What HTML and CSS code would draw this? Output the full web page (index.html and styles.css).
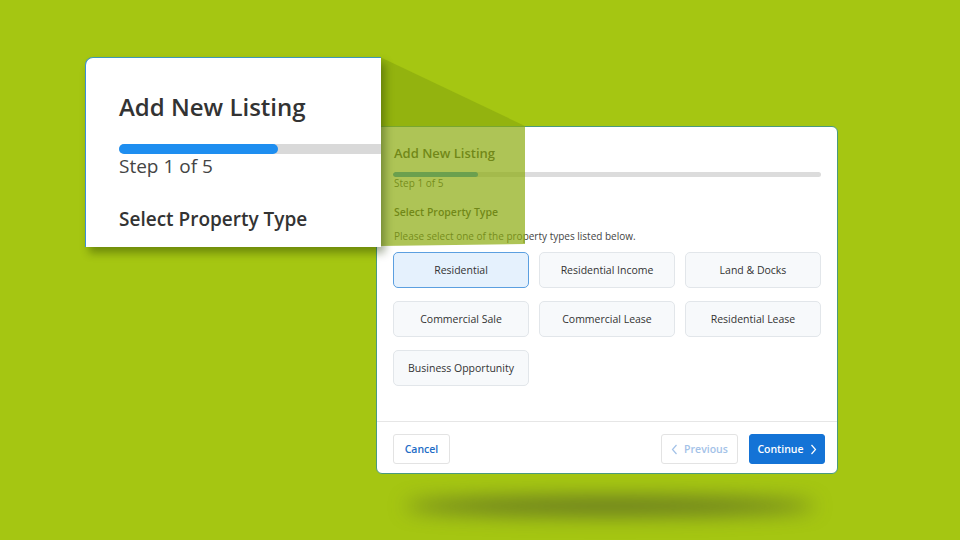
FILE: index.html
```html
<html>

<head>
    <link rel="stylesheet" href="styles.css">
</head>
    <body>
        <div class="floor-shadow"></div>

        <div class="modal">
            <div class="modal-body">
                <h2 class="title">Add New Listing</h2>
                <div class="progress"><div class="progress-fill"></div></div>
                <p class="step">Step 1 of 5</p>
                <h3 class="section">Select Property Type</h3>
                <p class="hint">Please select one of the property types listed below.</p>

                <div class="types">
                    <button class="type-btn selected">Residential</button>
                    <button class="type-btn">Residential Income</button>
                    <button class="type-btn">Land &amp; Docks</button>
                    <button class="type-btn">Commercial Sale</button>
                    <button class="type-btn">Commercial Lease</button>
                    <button class="type-btn">Residential Lease</button>
                    <button class="type-btn">Business Opportunity</button>
                </div>
            </div>

            <div class="modal-footer">
                <button class="foot-btn cancel-btn">Cancel</button>
                <div class="nav">
                    <button class="foot-btn prev-btn">
                        <svg width="7" height="11" viewBox="0 0 7 11"><polyline points="5.5,1 1.5,5.5 5.5,10" fill="none" stroke="currentColor" stroke-width="1.2"/></svg>
                        Previous
                    </button>
                    <button class="foot-btn next-btn">
                        Continue
                        <svg width="7" height="11" viewBox="0 0 7 11"><polyline points="1.5,1 5.5,5.5 1.5,10" fill="none" stroke="currentColor" stroke-width="1.2"/></svg>
                    </button>
                </div>
            </div>
        </div>

        <svg class="projection" width="960" height="540" viewBox="0 0 960 540">
            <polygon points="380,57 525,126 525,244 380,246" fill="rgba(140,171,14,0.7)"/>
        </svg>

        <div class="zoom-box">
            <h2 class="zoom-title">Add New Listing</h2>
            <div class="zoom-progress"><div class="zoom-fill"></div></div>
            <p class="zoom-step">Step 1 of 5</p>
            <h3 class="zoom-section">Select Property Type</h3>
        </div>
    </body>

</html>
```

FILE: styles.css
```css
html , body {
    width: 100%;
    height: 100%;
    overflow: hidden;
}
body{
    margin: 0;
    padding: 0;
    background-color: #a5c612;
    font-family: "Open Sans", "Liberation Sans", sans-serif;
    color: #333;
    position: relative;
}
button{
    font-family: inherit;
    cursor: pointer;
}

/* main dialog */
.modal{
    position: absolute;
    left: 376px;
    top: 126px;
    width: 460px;
    height: 346px;
    background-color: #fff;
    border: 1px solid #4a9a7e;
    border-radius: 6px;
    display: flex;
    flex-direction: column;
}
.modal-body{
    flex: 1;
    padding: 17px 16px 0 16px;
}
.title{
    margin: 0 0 0 1px;
    font-size: 13px;
    font-weight: 600;
    line-height: 18px;
    color: #333;
}
.progress{
    margin-top: 10px;
    height: 5px;
    border-radius: 3px;
    background-color: #dcdcdc;
    overflow: hidden;
}
.progress-fill{
    width: 85px;
    height: 100%;
    border-radius: 3px;
    background-color: #1e88e5;
}
.step{
    margin: 0 0 0 1px;
    font-size: 10px;
    line-height: 12px;
    color: #444;
}
.section{
    margin: 16px 0 0 1px;
    font-size: 10.5px;
    font-weight: 600;
    line-height: 14px;
    color: #333;
}
.hint{
    margin: 10px 0 0 1px;
    font-size: 10px;
    line-height: 14px;
    color: #444;
}
.types{
    margin-top: 9px;
    display: grid;
    grid-template-columns: repeat(3, 136px);
    column-gap: 10px;
    row-gap: 13px;
}
.type-btn{
    height: 36px;
    padding: 0;
    border: 1px solid #e2e6ea;
    border-radius: 5px;
    background-color: #f7f9fb;
    font-size: 10.5px;
    color: #333;
}
.type-btn.selected{
    background-color: #e5f1fd;
    border-color: #5b9fe0;
}

.modal-footer{
    border-top: 1px solid #e6e6e6;
    padding: 12px 12px 9px 16px;
    display: flex;
    justify-content: space-between;
}
.nav{
    display: flex;
    gap: 11px;
}
.foot-btn{
    height: 30px;
    border: 1px solid #e3e3e3;
    border-radius: 3px;
    background-color: #fff;
    font-size: 10.5px;
    font-weight: 600;
    display: flex;
    align-items: center;
    justify-content: center;
    gap: 6px;
    padding: 0;
}
.cancel-btn{
    width: 57px;
    color: #1e6cc6;
}
.prev-btn{
    width: 77px;
    color: #a3c2e8;
}
.next-btn{
    width: 76px;
    color: #fff;
    background-color: #1473d6;
    border-color: #1473d6;
}

/* magnified callout */
.projection{
    position: absolute;
    left: 0;
    top: 0;
    pointer-events: none;
}
.zoom-box{
    position: absolute;
    left: 85px;
    top: 57px;
    width: 262px;
    height: 189px;
    padding-left: 33px;
    background-color: #fff;
    border-top: 1px solid #3e98b8;
    border-left: 1px solid #3b8fd6;
    border-top-left-radius: 8px;
    box-shadow: 4px 6px 8px rgba(30, 50, 0, 0.4);
    overflow: hidden;
}
.zoom-title{
    margin: 33px 0 0 0;
    font-size: 24px;
    font-weight: 600;
    line-height: 32px;
    color: #333;
}
.zoom-progress{
    margin-top: 21px;
    width: 300px;
    height: 10px;
    border-radius: 5px;
    background-color: #d9d9d9;
}
.zoom-fill{
    width: 159px;
    height: 100%;
    border-radius: 5px;
    background-color: #1e8ef0;
}
.zoom-step{
    margin: 0;
    font-size: 19px;
    line-height: 24px;
    color: #444;
}
.zoom-section{
    margin: 29px 0 0 0;
    font-size: 19px;
    font-weight: 600;
    line-height: 24px;
    color: #333;
}

.floor-shadow{
    position: absolute;
    left: 405px;
    top: 497px;
    width: 410px;
    height: 18px;
    border-radius: 50%;
    background-color: rgba(70, 80, 40, 0.7);
    filter: blur(10px);
}
```
